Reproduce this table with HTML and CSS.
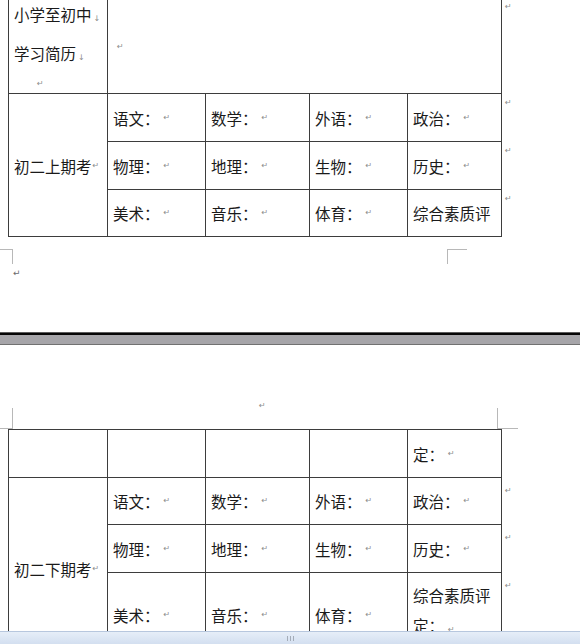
FILE: index.html
```html
<!DOCTYPE html>
<html lang="zh-CN">
<head>
<meta charset="utf-8">
<title>初二成绩表</title>
<link rel="stylesheet" href="styles.css">
</head>
<body>
<div class="screen">
  <section class="page page-1">
    <div class="table-row">
      <div class="grade-table t1">
        <div class="cell intro">
          <div class="line l1">小学至初中<span class="lb">↓</span></div>
          <div class="line l2">学习简历<span class="lb">↓</span></div>
          <div class="line l3"><span class="pm">↵</span></div>
        </div>
        <div class="cell wide"><span class="pm">↵</span></div>
        <div class="cell label">初二上期考<span class="pm tight">↵</span></div>
        <div class="cell">语文：<span class="pm">↵</span></div>
        <div class="cell">数学：<span class="pm">↵</span></div>
        <div class="cell">外语：<span class="pm">↵</span></div>
        <div class="cell">政治：<span class="pm">↵</span></div>
        <div class="cell">物理：<span class="pm">↵</span></div>
        <div class="cell">地理：<span class="pm">↵</span></div>
        <div class="cell">生物：<span class="pm">↵</span></div>
        <div class="cell">历史：<span class="pm">↵</span></div>
        <div class="cell">美术：<span class="pm">↵</span></div>
        <div class="cell">音乐：<span class="pm">↵</span></div>
        <div class="cell">体育：<span class="pm">↵</span></div>
        <div class="cell">综合素质评</div>
      </div>
      <div class="row-marks t1-marks">
        <span class="mark">↵</span>
        <span class="mark">↵</span>
        <span class="mark">↵</span>
        <span class="mark">↵</span>
      </div>
    </div>
    <div class="corners corners-bottom">
      <span class="corner corner-bl"></span>
      <span></span>
      <span class="corner corner-br"></span>
    </div>
    <div class="end-mark"><span class="pm dark">↵</span></div>
  </section>

  <div class="page-gap"></div>

  <section class="page page-2">
    <div class="header-mark"><span class="pm">↵</span></div>
    <div class="corners corners-top">
      <span class="corner corner-tl"></span>
      <span></span>
      <span class="corner corner-tr"></span>
    </div>
    <div class="table-row">
      <div class="grade-table t2">
        <div class="cell"></div>
        <div class="cell"></div>
        <div class="cell"></div>
        <div class="cell"></div>
        <div class="cell">定：<span class="pm">↵</span></div>
        <div class="cell label">初二下期考<span class="pm tight">↵</span></div>
        <div class="cell">语文：<span class="pm">↵</span></div>
        <div class="cell">数学：<span class="pm">↵</span></div>
        <div class="cell">外语：<span class="pm">↵</span></div>
        <div class="cell">政治：<span class="pm">↵</span></div>
        <div class="cell">物理：<span class="pm">↵</span></div>
        <div class="cell">地理：<span class="pm">↵</span></div>
        <div class="cell">生物：<span class="pm">↵</span></div>
        <div class="cell">历史：<span class="pm">↵</span></div>
        <div class="cell">美术：<span class="pm">↵</span></div>
        <div class="cell">音乐：<span class="pm">↵</span></div>
        <div class="cell">体育：<span class="pm">↵</span></div>
        <div class="cell wrap">综合素质评定：<span class="pm">↵</span></div>
      </div>
      <div class="row-marks t2-marks">
        <span class="mark"></span>
        <span class="mark">↵</span>
        <span class="mark">↵</span>
        <span class="mark">↵</span>
      </div>
    </div>
  </section>

  <footer class="statusbar"><span class="grip"></span></footer>
</div>
</body>
</html>
```

FILE: styles.css
```css
html, body {
  margin: 0;
  padding: 0;
  background: #ffffff;
}

.screen {
  width: 580px;
  height: 644px;
  overflow: hidden;
  display: flex;
  flex-direction: column;
  font-family: "Noto Sans CJK SC", "Noto Sans", sans-serif;
  font-size: 15.5px;
  color: #1a1a1a;
}

.page {
  overflow: hidden;
  flex: none;
}

.page-1 {
  height: 332px;
}

.page-2 {
  height: 286px;
}

.table-row {
  display: flex;
  align-items: flex-start;
  margin-left: 8px;
}

.page-1 .table-row {
  margin-top: -3px;
}

.grade-table {
  display: grid;
  grid-template-columns: 98px 97px 103px 97px 93px;
  gap: 1px;
  padding: 1px;
  background: #3d3d3d;
  flex: none;
}

.t1 {
  grid-template-rows: 95px 47px 47px 46px;
}

.t2 {
  grid-template-rows: 47px 46px 47px 84px;
}

.cell {
  background: #ffffff;
  display: flex;
  align-items: center;
  padding-left: 5px;
  white-space: nowrap;
  overflow: hidden;
  line-height: 20px;
}

.cell.wide {
  grid-column: 2 / span 4;
  padding-top: 2px;
}

.cell.label {
  grid-column: 1;
  grid-row: 2 / span 3;
  padding-top: 2px;
}

.cell.intro {
  display: block;
  padding-top: 3px;
}

.intro .line {
  line-height: 26px;
  height: 26px;
}

.intro .l2 {
  margin-top: 13px;
}

.intro .l3 {
  padding-left: 19px;
}

.cell.wrap {
  display: block;
  white-space: normal;
  padding-top: 7px;
  padding-right: 2px;
  line-height: 30px;
}

.pm {
  font-family: "DejaVu Sans", sans-serif;
  font-size: 8px;
  color: #8c8c8c;
  margin-left: 4px;
  line-height: 1;
}

.pm.tight {
  margin-left: 1px;
}

.pm.dark {
  color: #6a6a6a;
  font-size: 9px;
  margin-left: 0;
}

.lb {
  font-family: "DejaVu Sans", sans-serif;
  font-size: 8px;
  color: #8c8c8c;
  margin-left: 2px;
}

.row-marks {
  display: grid;
  gap: 1px;
  padding-top: 1px;
  padding-left: 3px;
  flex: none;
}

.t1-marks {
  grid-template-rows: 95px 47px 47px 46px;
}

.t2-marks {
  grid-template-rows: 47px 46px 47px 84px;
}

.mark {
  font-family: "DejaVu Sans", sans-serif;
  font-size: 8px;
  line-height: 10px;
  color: #8c8c8c;
  padding-top: 4px;
}

.t2-marks .mark {
  padding-top: 8px;
}

.corners {
  display: grid;
}

.corners-bottom {
  margin-top: 12px;
  grid-template-columns: 13px 434px 20px;
}

.corners-top {
  margin-top: 2px;
  grid-template-columns: 13px 484px 21px;
}

.corner {
  display: block;
  border-color: #b8b8b8;
  border-style: solid;
  border-width: 0;
}

.corner-bl {
  height: 14px;
  border-top-width: 1px;
  border-right-width: 1px;
}

.corner-br {
  height: 14px;
  border-top-width: 1px;
  border-left-width: 1px;
}

.corner-tl {
  height: 20px;
  border-bottom-width: 1px;
  border-right-width: 1px;
}

.corner-tr {
  height: 20px;
  border-bottom-width: 1px;
  border-left-width: 1px;
}

.end-mark {
  padding-left: 13px;
  height: 10px;
  line-height: 10px;
}

.header-mark {
  margin-top: 51px;
  padding-left: 255px;
  height: 10px;
  line-height: 10px;
}

.page-gap {
  flex: none;
  height: 13px;
  background: linear-gradient(to bottom,
    #5b5b5b 0, #5b5b5b 1px,
    #050505 1px, #050505 3px,
    #a6a5a9 3px, #a6a5a9 12px,
    #717171 12px, #717171 13px);
}

.statusbar {
  flex: none;
  height: 13px;
  border-top: 1px solid #b7c7de;
  background: linear-gradient(to bottom, #e6eef8, #d3dff0);
  display: flex;
  justify-content: center;
  align-items: center;
  box-sizing: border-box;
}

.grip {
  display: block;
  width: 7px;
  height: 5px;
  background: repeating-linear-gradient(to right, #a4acb8 0, #a4acb8 1px, transparent 1px, transparent 3px);
}
```
